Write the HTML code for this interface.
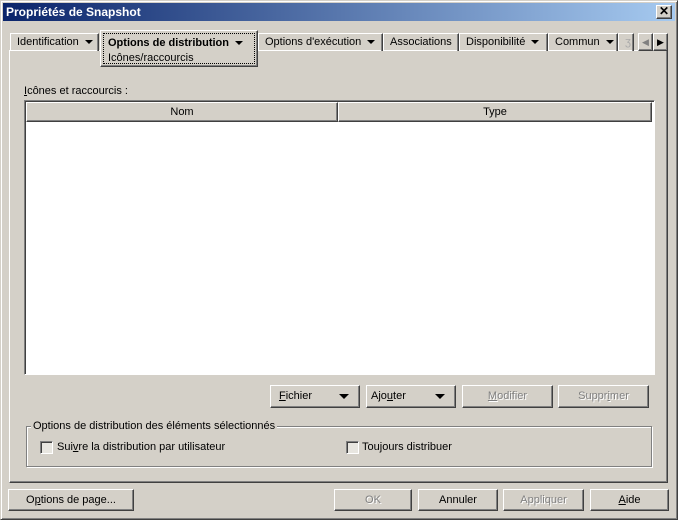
<!DOCTYPE html>
<html><head><meta charset="utf-8"><style>
*{box-sizing:border-box;margin:0;padding:0}
body{width:678px;height:520px;background:#d4d0c8;font-family:"Liberation Sans",sans-serif;font-size:11px;color:#000;position:relative;overflow:hidden}
.a{position:absolute}
.win{left:0;top:0;width:678px;height:520px;border:1px solid;border-color:#d4d0c8 #404040 #404040 #d4d0c8;box-shadow:inset 1px 1px #fff,inset -1px -1px #808080}
.title{left:3px;top:3px;width:672px;height:18px;background:linear-gradient(90deg,#0a246a,#a6caf0);color:#fff;font-weight:bold;font-size:12px;line-height:18px;padding-left:3px}
.btn{position:absolute;background:#d4d0c8;border:1px solid;border-color:#fff #404040 #404040 #fff;box-shadow:inset -1px -1px #808080;text-align:center;line-height:21px}
.dis{color:#808080;text-shadow:1px 1px #fff}
.tab{position:absolute;top:33px;height:18px;border:1px solid;border-bottom:none;border-color:#fff #404040 #404040 #fff;box-shadow:inset -1px 0 #808080;line-height:16px;padding-left:6px;white-space:nowrap}
.arr{display:inline-block;width:0;height:0;border-left:4px solid transparent;border-right:4px solid transparent;border-top:4px solid #000;vertical-align:middle;margin-left:6px}
.arrb{position:absolute;right:10px;top:8px;width:0;height:0;border-left:5px solid transparent;border-right:5px solid transparent;border-top:5px solid #000}
u{text-decoration:underline}
.cb{position:absolute;width:13px;height:13px;border:1px solid;border-color:#808080 #fff #fff #808080;box-shadow:inset 1px 1px #404040;background:#e8e6e0}
</style></head><body>
<div class="a win"></div>
<div class="a title">Propriétés de Snapshot</div>
<div class="btn" style="left:656px;top:5px;width:16px;height:14px;line-height:11px;font-weight:bold;font-size:12px">✕</div>

<div class="a" style="left:9px;top:50px;width:659px;height:433px;border:1px solid;border-color:#fff #404040 #404040 #fff;box-shadow:inset -1px -1px #808080"></div>

<div class="tab" style="left:10px;width:89px">Identification<span class="arr"></span></div>
<div class="tab" style="left:258px;width:125px">Options d'exécution<span class="arr"></span></div>
<div class="tab" style="left:383px;width:76px">Associations</div>
<div class="tab" style="left:459px;width:89px">Disponibilité<span class="arr"></span></div>
<div class="tab" style="left:548px;width:70px">Commun<span class="arr"></span></div>
<div class="tab" style="left:618px;width:16px;color:#aaa">ʒ</div>
<div class="a" style="left:100px;top:30px;width:158px;height:37px;background:#d4d0c8;border:1px solid;border-color:#fff #404040 #404040 #fff;box-shadow:inset -1px -1px #808080"></div>
<div class="a" style="left:103px;top:33px;width:152px;height:31px;border:1px dotted #000;padding:2px 0 0 4px;line-height:15px"><b>Options de distribution</b><span class="arr"></span><br>Icônes/raccourcis</div>
<div class="btn" style="left:638px;top:33px;width:15px;height:18px;line-height:16px;color:#808080;font-size:9px">◀</div>
<div class="btn" style="left:653px;top:33px;width:15px;height:18px;line-height:16px;font-size:9px">▶</div>

<div class="a" style="left:24px;top:85px"><u>I</u>cônes et raccourcis :</div>
<div class="a" style="left:24px;top:100px;width:631px;height:275px;background:#fff;border:1px solid;border-color:#808080 #fff #fff #808080;box-shadow:inset 1px 1px #404040"></div>
<div class="btn" style="left:26px;top:102px;width:312px;height:20px;line-height:19px">Nom</div>
<div class="btn" style="left:338px;top:102px;width:314px;height:20px;line-height:19px">Type</div>

<div class="btn" style="left:270px;top:385px;width:90px;height:23px;text-align:left;padding-left:8px"><u>F</u>ichier<span class="arrb"></span></div>
<div class="btn" style="left:366px;top:385px;width:90px;height:23px;text-align:left;padding-left:4px">Ajo<u>u</u>ter<span class="arrb"></span></div>
<div class="btn dis" style="left:462px;top:385px;width:91px;height:23px"><u>M</u>odifier</div>
<div class="btn dis" style="left:558px;top:385px;width:91px;height:23px">Suppr<u>i</u>mer</div>

<div class="a" style="left:26px;top:426px;width:626px;height:41px;border:1px solid #808080;box-shadow:1px 1px #fff,inset 1px 1px #fff"></div>
<div class="a" style="left:31px;top:420px;background:#d4d0c8;padding:0 2px">Options de distribution des éléments sélectionnés</div>
<div class="cb" style="left:40px;top:441px"></div>
<div class="a" style="left:57px;top:441px">Sui<u>v</u>re la distribution par utilisateur</div>
<div class="cb" style="left:346px;top:441px"></div>
<div class="a" style="left:362px;top:441px">Tou<u>j</u>ours distribuer</div>

<div class="btn" style="left:8px;top:489px;width:126px;height:22px">O<u>p</u>tions de page...</div>
<div class="btn dis" style="left:334px;top:489px;width:78px;height:22px">OK</div>
<div class="btn" style="left:418px;top:489px;width:80px;height:22px">Annuler</div>
<div class="btn dis" style="left:503px;top:489px;width:81px;height:22px">Appliquer</div>
<div class="btn" style="left:590px;top:489px;width:79px;height:22px"><u>A</u>ide</div>
</body></html>
